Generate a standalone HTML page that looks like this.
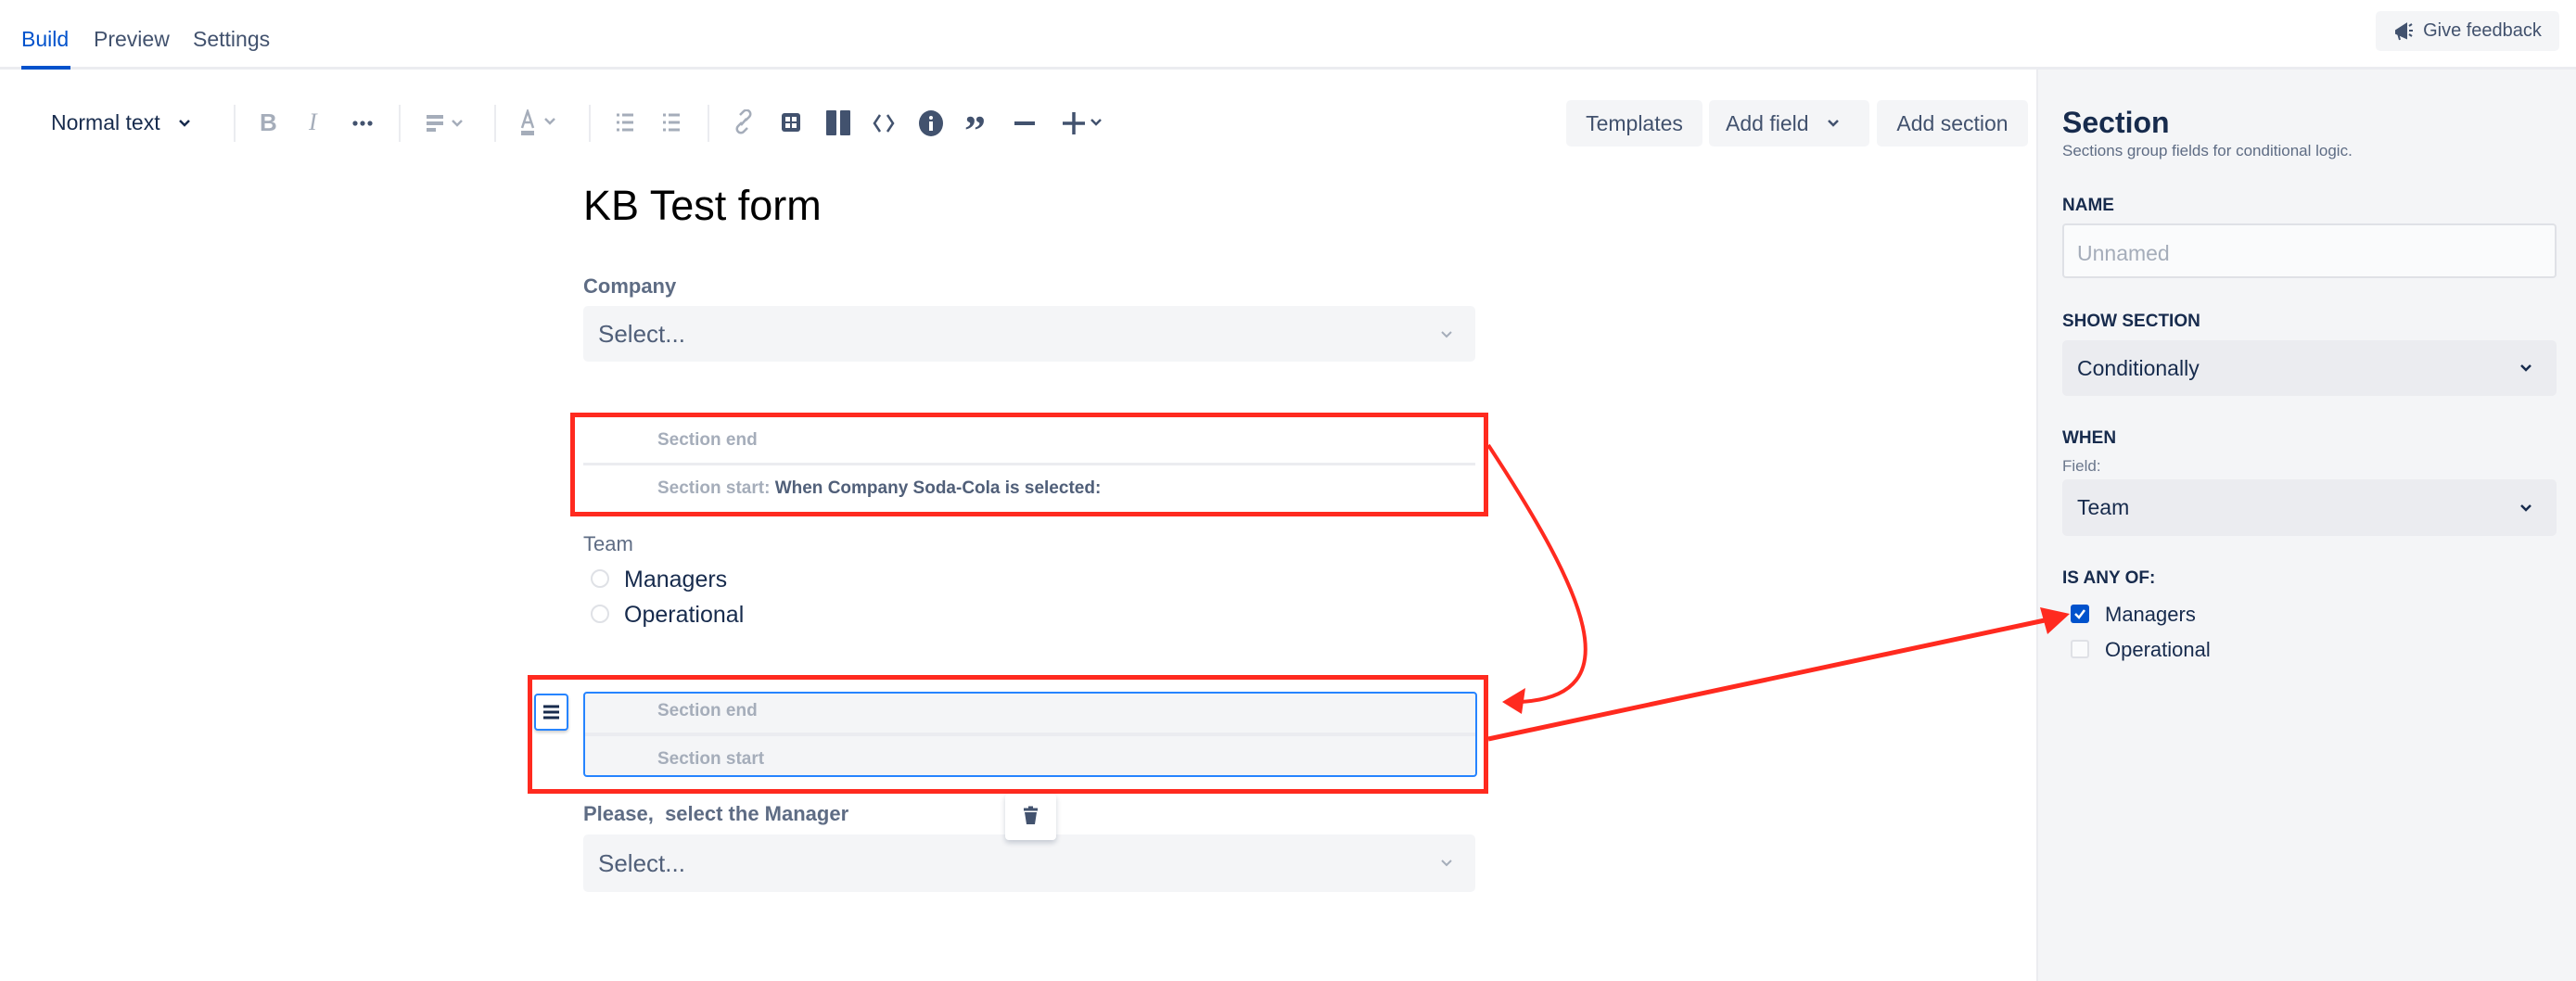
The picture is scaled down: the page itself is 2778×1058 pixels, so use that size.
<!DOCTYPE html>
<html><head><meta charset="utf-8"><style>
*{box-sizing:border-box;margin:0;padding:0}
body{width:2778px;height:1058px;position:relative;background:#fff;font-family:"Liberation Sans",sans-serif;color:#172b4d;overflow:hidden}
.a{position:absolute}
.tab{font-size:23px;top:29px;color:#42526e}
.btn{position:absolute;background:#f4f5f7;border-radius:5px;font-size:23px;color:#42526e;display:flex;align-items:center;justify-content:center}
.sep{position:absolute;top:113px;width:2px;height:40px;background:#ebecf0}
.ic{position:absolute;top:118px}
.lbl{position:absolute;font-size:19px;font-weight:bold;color:#172b4d}
.sel{position:absolute;background:#ebecf0;border-radius:5px;font-size:23px;color:#172b4d;padding-left:16px;display:flex;align-items:center}
.fsel{position:absolute;background:#f4f5f7;border-radius:5px;font-size:26px;color:#505f79;padding-left:16px;display:flex;align-items:center}
.sec{position:absolute;font-size:19px;color:#a5adba;font-weight:bold}
.chev{position:absolute}
</style></head><body>
<div class="a tab" style="left:23px;color:#0052cc">Build</div>
<div class="a tab" style="left:101px">Preview</div>
<div class="a tab" style="left:208px">Settings</div>
<div class="a" style="left:0;top:72px;width:2778px;height:3px;background:#ebecf0"></div>
<div class="a" style="left:23px;top:71px;width:53px;height:4px;background:#0052cc"></div>
<div class="btn" style="left:2562px;top:12px;width:198px;height:43px;font-size:20px;color:#42526e"><svg width="24" height="22" viewBox="0 0 24 22" style="margin-right:8px"><path d="M3 10 L14 3 V18 L3 13Z M5 13 L7 20" fill="#42526e" stroke="#42526e" stroke-width="2"/><path d="M17 5 L20 3 M17 10 H21 M17 14 L20 16" stroke="#42526e" stroke-width="2"/></svg>Give feedback</div>

<div class="a" style="left:2196px;top:75px;width:582px;height:983px;background:#f4f5f7;border-left:2px solid #ebecf0"></div>

<!-- toolbar -->
<div class="a" style="left:55px;top:119px;font-size:23px;color:#172b4d">Normal text</div>
<svg class="chev" style="left:192px;top:128px" width="14" height="10"><path d="M2 2l5 5 5-5" stroke="#172b4d" stroke-width="2.5" fill="none"/></svg>
<div class="sep" style="left:252px"></div><div class="sep" style="left:430px"></div><div class="sep" style="left:533px"></div><div class="sep" style="left:635px"></div><div class="sep" style="left:763px"></div>
<div class="ic" style="left:280px;top:117px;font-size:26px;font-weight:bold;color:#a5adba">B</div>
<div class="ic" style="left:333px;top:117px;font-size:26px;font-style:italic;color:#a5adba;font-family:'Liberation Serif',serif">I</div>
<svg class="ic" style="left:380px;top:130px" width="22" height="6"><circle cx="3" cy="3" r="2.6" fill="#42526e"/><circle cx="11" cy="3" r="2.6" fill="#42526e"/><circle cx="19" cy="3" r="2.6" fill="#42526e"/></svg>
<svg class="ic" style="left:458px;top:122px" width="48" height="22"><path d="M2 4h18M2 11h18M2 18h10" stroke="#a5adba" stroke-width="4"/><path d="M30 8l5 5 5-5" stroke="#a5adba" stroke-width="2.5" fill="none"/></svg>
<svg class="ic" style="left:560px;top:118px" width="48" height="30"><path d="M3 20 L9 2 L15 20 M5 14h8" stroke="#a5adba" stroke-width="2.5" fill="none"/><rect x="2" y="23" width="14" height="5" fill="#a5adba"/><path d="M28 10l5 5 5-5" stroke="#a5adba" stroke-width="2.5" fill="none"/></svg>
<svg class="ic" style="left:663px;top:121px" width="22" height="22"><path d="M2 3h3M2 11h3M2 19h3M8 3h12M8 11h12M8 19h12" stroke="#a5adba" stroke-width="3"/></svg>
<svg class="ic" style="left:713px;top:121px" width="22" height="22"><path d="M2 3h3M2 11h3M2 19h3M8 3h12M8 11h12M8 19h12" stroke="#a5adba" stroke-width="3"/></svg>
<svg class="ic" style="left:790px;top:118px" width="24" height="28"><path d="M10 14l-4 4a4 4 0 0 0 6 6l4-4M14 12l4-4a4 4 0 0 0-6-6l-4 4M9 17l6-7" stroke="#a5adba" stroke-width="2.5" fill="none"/></svg>
<svg class="ic" style="left:842px;top:121px" width="22" height="22"><rect x="1" y="1" width="20" height="20" rx="3" fill="#42526e"/><path d="M5 5h5v5H5zM12 5h5v5h-5zM5 12h5v5H5zM12 12h5v5h-5z" fill="#fff"/></svg>
<svg class="ic" style="left:891px;top:119px" width="26" height="27"><rect x="0" y="0" width="11" height="27" rx="1" fill="#42526e"/><rect x="15" y="0" width="11" height="27" rx="1" fill="#42526e"/></svg>
<svg class="ic" style="left:941px;top:121px" width="24" height="24"><path d="M8 3L2 12l6 9M16 3l6 9-6 9" stroke="#42526e" stroke-width="2.5" fill="none"/></svg>
<svg class="ic" style="left:990px;top:118px" width="28" height="30"><ellipse cx="14" cy="15" rx="13" ry="14" fill="#42526e"/><rect x="12" y="13" width="4" height="10" fill="#fff"/><circle cx="14" cy="9" r="2" fill="#fff"/></svg>
<div class="ic" style="left:1040px;top:114px;font-size:46px;font-weight:bold;color:#42526e;font-family:'Liberation Serif',serif">&#8221;</div>
<div class="ic" style="left:1094px;top:131px;width:22px;height:4px;background:#42526e"></div>
<svg class="ic" style="left:1146px;top:119px" width="44" height="28"><path d="M12 2v24M0 14h24" stroke="#42526e" stroke-width="3.5"/><path d="M31 10l5 5 5-5" stroke="#42526e" stroke-width="2.5" fill="none"/></svg>

<div class="btn" style="left:1689px;top:108px;width:147px;height:50px">Templates</div>
<div class="btn" style="left:1843px;top:108px;width:173px;height:50px;justify-content:flex-start;padding-left:18px">Add field</div>
<svg class="chev" style="left:1970px;top:128px" width="14" height="10"><path d="M2 2l5 5 5-5" stroke="#42526e" stroke-width="2.5" fill="none"/></svg>
<div class="btn" style="left:2024px;top:108px;width:163px;height:50px">Add section</div>

<!-- right panel -->
<div class="a" style="left:2224px;top:114px;font-size:32px;font-weight:bold;color:#172b4d">Section</div>
<div class="a" style="left:2224px;top:153px;font-size:17px;color:#5e6c84">Sections group fields for conditional logic.</div>
<div class="lbl" style="left:2224px;top:211px">NAME</div>
<div class="a" style="left:2224px;top:241px;width:533px;height:59px;background:#fafbfc;border:2px solid #dfe1e6;border-radius:4px;font-size:23px;color:#a5adba;padding:17px 0 0 14px">Unnamed</div>
<div class="lbl" style="left:2224px;top:336px">SHOW SECTION</div>
<div class="sel" style="left:2224px;top:367px;width:533px;height:60px">Conditionally</div>
<svg class="chev" style="left:2717px;top:392px" width="14" height="10"><path d="M2 2l5 5 5-5" stroke="#172b4d" stroke-width="2.5" fill="none"/></svg>
<div class="lbl" style="left:2224px;top:462px">WHEN</div>
<div class="a" style="left:2224px;top:493px;font-size:17px;color:#6b778c">Field:</div>
<div class="sel" style="left:2224px;top:517px;width:533px;height:61px">Team</div>
<svg class="chev" style="left:2717px;top:543px" width="14" height="10"><path d="M2 2l5 5 5-5" stroke="#172b4d" stroke-width="2.5" fill="none"/></svg>
<div class="lbl" style="left:2224px;top:613px">IS ANY OF:</div>
<div class="a" style="left:2233px;top:652px;width:20px;height:20px;background:#0052cc;border-radius:3px"><svg width="20" height="20"><path d="M5 10l4 4 6-8" stroke="#fff" stroke-width="2.5" fill="none"/></svg></div>
<div class="a" style="left:2270px;top:650px;font-size:22px">Managers</div>
<div class="a" style="left:2233px;top:690px;width:20px;height:20px;background:#fafbfc;border:2px solid #dfe1e6;border-radius:3px"></div>
<div class="a" style="left:2270px;top:688px;font-size:22px">Operational</div>

<!-- form -->
<div class="a" style="left:629px;top:196px;font-size:45px;color:#000">KB Test form</div>
<div class="a" style="left:629px;top:296px;font-size:22px;font-weight:bold;color:#5e6c84">Company</div>
<div class="fsel" style="left:629px;top:330px;width:962px;height:60px">Select...</div>
<svg class="chev" style="left:1553px;top:356px" width="14" height="10"><path d="M2 2l5 5 5-5" stroke="#a5adba" stroke-width="2" fill="none"/></svg>

<div class="a" style="left:615px;top:445px;width:990px;height:112px;border:5px solid #ff2a1f"></div>
<div class="sec" style="left:709px;top:464px">Section end</div>
<div class="a" style="left:629px;top:499px;width:962px;height:3px;background:#ebecf0"></div>
<div class="sec" style="left:709px;top:516px">Section start: <span style="color:#505f79">When Company Soda-Cola is selected:</span></div>

<div class="a" style="left:629px;top:574px;font-size:22px;color:#5e6c84">Team</div>
<div class="a" style="left:637px;top:614px;width:20px;height:20px;border:2px solid #dfe1e6;border-radius:50%"></div>
<div class="a" style="left:673px;top:611px;font-size:25px">Managers</div>
<div class="a" style="left:637px;top:652px;width:20px;height:20px;border:2px solid #dfe1e6;border-radius:50%"></div>
<div class="a" style="left:673px;top:649px;font-size:25px">Operational</div>

<div class="a" style="left:569px;top:728px;width:1036px;height:128px;border:5px solid #ff2a1f"></div>
<div class="a" style="left:629px;top:746px;width:964px;height:92px;background:#f4f5f7;border:2px solid #2684ff;border-radius:4px"></div>
<div class="a" style="left:631px;top:790px;width:960px;height:4px;background:#ebecf0"></div>
<div class="sec" style="left:709px;top:756px">Section end</div>
<div class="sec" style="left:709px;top:808px">Section start</div>
<div class="a" style="left:576px;top:748px;width:37px;height:40px;background:#fff;border:2px solid #2684ff;border-radius:4px;box-shadow:0 2px 3px rgba(0,0,0,.2)"><svg width="33" height="36"><path d="M8 12h17M8 18h17M8 24h17" stroke="#172b4d" stroke-width="3"/></svg></div>

<div class="a" style="left:629px;top:865px;font-size:22px;font-weight:bold;color:#5e6c84">Please,&nbsp; select the Manager</div>
<div class="fsel" style="left:629px;top:900px;width:962px;height:62px">Select...</div>
<svg class="chev" style="left:1553px;top:926px" width="14" height="10"><path d="M2 2l5 5 5-5" stroke="#a5adba" stroke-width="2" fill="none"/></svg>
<div class="a" style="left:1084px;top:856px;width:55px;height:50px;background:#fff;border-radius:4px;box-shadow:0 3px 6px rgba(9,30,66,.2)"><svg width="55" height="50"><path d="M20 17h15M25 15h5" stroke="#42526e" stroke-width="3"/><path d="M21 20h13l-2 13h-9z" fill="#42526e"/></svg></div>

<svg class="a" style="left:0;top:0" width="2778" height="1058">
<path d="M1605 480 C1710 640 1760 750 1640 757" stroke="#ff2a1f" stroke-width="4" fill="none"/>
<path d="M1620 757 L1645 742 L1641 770Z" fill="#ff2a1f"/>
<path d="M1605 797 L2205 669" stroke="#ff2a1f" stroke-width="5" fill="none"/>
<path d="M2232 662 L2200 655 L2208 684Z" fill="#ff2a1f"/>
</svg>
</body></html>
